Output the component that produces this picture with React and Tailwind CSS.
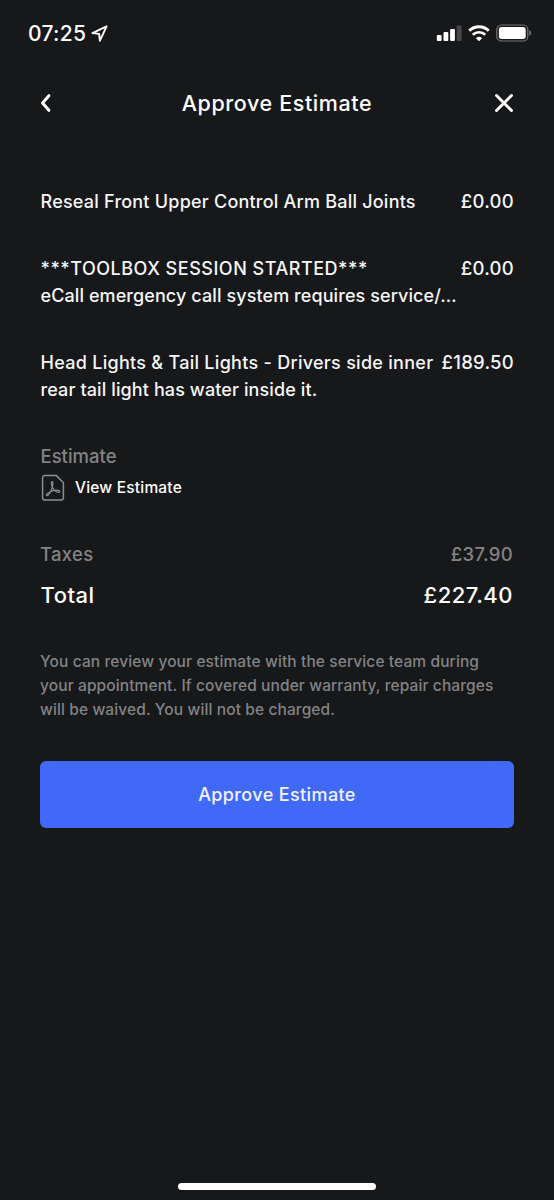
const items = [
  {
    id: 1,
    lines: [{ text: "Reseal Front Upper Control Arm Ball Joints", tracking: "tracking-[0.22px]" }],
    price: "£0.00",
  },
  {
    id: 2,
    lines: [
      { text: "***TOOLBOX SESSION STARTED***", tracking: "tracking-[0.52px]" },
      { text: "eCall emergency call system requires service/…", tracking: "tracking-[0.09px]" },
    ],
    price: "£0.00",
  },
  {
    id: 3,
    lines: [
      { text: "Head Lights & Tail Lights - Drivers side inner", tracking: "tracking-[0.28px]" },
      { text: "rear tail light has water inside it.", tracking: "tracking-[0.11px]" },
    ],
    price: "£189.50",
  },
];

function LocationIcon() {
  return (
    <svg width="17" height="17" viewBox="0 0 17 17" fill="none" stroke="currentColor" strokeWidth="1.9" strokeLinejoin="round">
      <path d="M15.6 1.3 1.4 8.1l6.7.8.8 6.8z" />
    </svg>
  );
}

function SignalIcon() {
  return (
    <svg width="26" height="17" viewBox="0 0 26 17" fill="#fff">
      <rect x="0.8" y="10" width="4.8" height="6" rx="1.1" />
      <rect x="7.5" y="7" width="4.8" height="9" rx="1.1" />
      <rect x="14.1" y="4" width="4.8" height="12" rx="1.1" />
      <rect x="20.7" y="0.6" width="4.8" height="15.4" rx="1.1" fill="#47484a" />
    </svg>
  );
}

function WifiIcon() {
  return (
    <svg width="22" height="17" viewBox="0 0 22 17" fill="none" stroke="#fff">
      <path d="M1.3 5.8a13.9 13.9 0 0 1 19.4 0" strokeWidth="3" />
      <path d="M4.8 9.8a8.8 8.8 0 0 1 12.4 0" strokeWidth="2.7" />
      <path d="M11 16.2 8 13.2a4.4 4.4 0 0 1 6 0z" fill="#fff" stroke="none" />
    </svg>
  );
}

function BatteryIcon() {
  return (
    <svg width="36" height="18" viewBox="0 0 36 18" fill="none">
      <rect x="0.8" y="1" width="31" height="16" rx="4.6" stroke="#747577" strokeWidth="1.2" />
      <rect x="2.9" y="3.1" width="26.8" height="11.8" rx="2.6" fill="#fff" />
      <path d="M33.3 6.3c1.2.4 1.9 1.5 1.9 2.7s-.7 2.3-1.9 2.7z" fill="#747577" />
    </svg>
  );
}

function PdfIcon() {
  return (
    <svg width="24" height="28" viewBox="0 0 24 28" fill="none" stroke="#8d8e90" strokeLinejoin="round">
      <path d="M3.9 1.4h11.3l7.2 7.3v15.1a2.3 2.3 0 0 1-2.3 2.3H3.9a2.3 2.3 0 0 1-2.3-2.3V3.7a2.3 2.3 0 0 1 2.3-2.3z" strokeWidth="1.5" />
      <path
        d="M11.1 7.6c-1.3.1-.8 3.4.5 5.9 1.4 2.6 3.9 4.8 5.9 4.8 1.7-.1 1.7-1.7-.3-2-2.7-.4-6.6.6-9.3 2.2-2 1.2-3 2.6-2.3 3.1.9.7 2.7-1.5 3.9-3.9 1.3-2.5 2.1-5.2 2.4-7.5.2-1.5 0-2.7-.8-2.6z"
        strokeWidth="1.2"
      />
    </svg>
  );
}

function StatusBar() {
  return (
    <div className="flex h-[66px] items-center justify-between pl-7 pr-[22px]">
      <div className="flex items-center gap-[5px]">
        <span className="text-[21px] leading-none font-medium tracking-[0.3px]">07:25</span>
        <LocationIcon />
      </div>
      <div className="flex items-center">
        <SignalIcon />
        <div className="mx-[6px]">
          <WifiIcon />
        </div>
        <BatteryIcon />
      </div>
    </div>
  );
}

function Header() {
  return (
    <div className="flex h-[74px] items-center justify-between px-10">
      <button className="w-5" aria-label="Back">
        <svg width="12" height="20" viewBox="0 0 12 20" fill="none" stroke="currentColor" strokeWidth="3" strokeLinecap="round" strokeLinejoin="round">
          <path d="M8.9 2.7 2.5 10l6.4 7.3" />
        </svg>
      </button>
      <h1 className="text-[21.5px] font-medium tracking-[0.6px]">Approve Estimate</h1>
      <button className="w-5" aria-label="Close">
        <svg width="20" height="20" viewBox="0 0 20 20" fill="none" stroke="currentColor" strokeWidth="2.9" strokeLinecap="round">
          <path d="m2.5 2.5 15 15M17.5 2.5l-15 15" />
        </svg>
      </button>
    </div>
  );
}

export default function App() {
  return (
    <div className="flex h-[1200px] w-[554px] flex-col bg-[#17181a] font-['Inter',sans-serif] font-medium text-white">
      <StatusBar />
      <Header />

      <main className="flex flex-col px-10 pt-12">
        {/* Line items */}
        <div className="flex flex-col gap-10 pl-[0.5px] text-[18px] leading-[27px] text-[#f6f6f7]">
          {items.map((item) => (
            <div key={item.id} className="flex justify-between">
              <div className="w-0 flex-1 whitespace-nowrap">
                {item.lines.map((line) => (
                  <p key={line.text} className={line.tracking}>
                    {line.text}
                  </p>
                ))}
              </div>
              <span className="text-[18.5px] tracking-[0.25px]">{item.price}</span>
            </div>
          ))}
        </div>

        {/* Estimate document */}
        <h2 className="mt-10 pl-[0.5px] text-[18.5px] leading-[27px] font-medium text-[#828385]">Estimate</h2>
        <button className="mt-1 flex h-7 items-center gap-[10px] pl-[1px]">
          <PdfIcon />
          <span className="text-[15.5px] leading-6 tracking-[0.2px]">View Estimate</span>
        </button>

        {/* Totals */}
        <div className="mt-[39px] flex justify-between pr-[1px] text-[18.5px] leading-[27px] tracking-[0.3px] text-[#828385]">
          <span>Taxes</span>
          <span>£37.90</span>
        </div>
        <div className="mt-[12.5px] flex justify-between pr-[1px] pl-[0.5px] text-[22px] leading-7 tracking-[0.5px]">
          <span>Total</span>
          <span>£227.40</span>
        </div>

        <div className="mt-[41px] text-[15.5px] leading-6 tracking-[0.11px] whitespace-nowrap text-[#828385]">
          <p>You can review your estimate with the service team during</p>
          <p>your appointment. If covered under warranty, repair charges</p>
          <p>will be waived. You will not be charged.</p>
        </div>

        <button className="mt-[39px] h-[67px] rounded-md bg-[#4169f7] text-[18px] tracking-[0.38px] text-[#f1f3ff]">
          Approve Estimate
        </button>
      </main>

      {/* Home indicator */}
      <div className="mx-auto mt-auto mb-[10.5px] h-[7px] w-[198px] rounded-full bg-white" />
    </div>
  );
}
